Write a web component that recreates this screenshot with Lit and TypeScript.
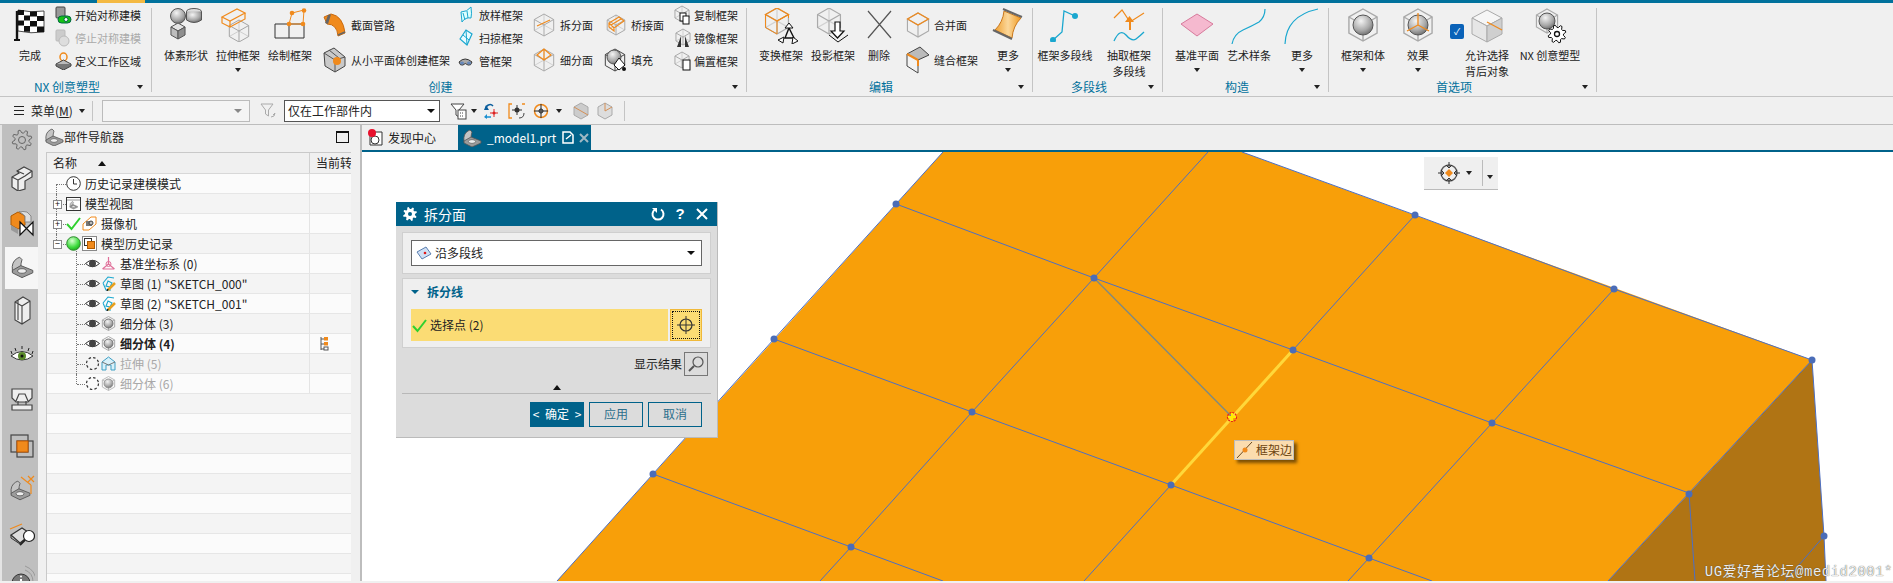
import { LitElement, html, css, svg, TemplateResult } from "lit";
import { customElement } from "lit/decorators.js";

const GR = "#9a9a9a";
const OR = "#f08a1c";
const CY = "#1aa7cf";

const ic = (w: number, h: number, body: unknown) =>
  html`<svg class="ic" width=${w} height=${h} viewBox="0 0 ${w} ${h}">${body}</svg>`;

// wire cube, centre cx,cy radius r
function wire(cx: number, cy: number, r: number, col = GR, sw = 1, back = true) {
  const dx = r * 0.88, dy = r * 0.5;
  return svg`<g fill="none" stroke=${col} stroke-width=${sw}>
    <path d="M${cx} ${cy - r}L${cx + dx} ${cy - dy}V${cy + dy}L${cx} ${cy + r}L${cx - dx} ${cy + dy}V${cy - dy}Z"/>
    <path d="M${cx - dx} ${cy - dy}L${cx} ${cy}L${cx + dx} ${cy - dy}M${cx} ${cy}V${cy + r}"/>
    ${back ? svg`<path opacity=".45" d="M${cx - dx} ${cy + dy}L${cx} ${cy}L${cx + dx} ${cy + dy}M${cx} ${cy}V${cy - r}"/>` : null}
  </g>`;
}
const solidCube = (cx: number, cy: number, r: number) => {
  const dx = r * 0.88, dy = r * 0.5;
  return svg`<path fill="#e4e4e4" stroke="#555" d="M${cx} ${cy - r}L${cx + dx} ${cy - dy}L${cx} ${cy}L${cx - dx} ${cy - dy}Z"/>
  <path fill="#bdbdbd" stroke="#555" d="M${cx - dx} ${cy - dy}L${cx} ${cy}V${cy + r}L${cx - dx} ${cy + dy}Z"/>
  <path fill="#8f8f8f" stroke="#555" d="M${cx + dx} ${cy - dy}L${cx} ${cy}V${cy + r}L${cx + dx} ${cy + dy}Z"/>`;
};
const ball = (cx: number, cy: number, r: number, stroke = "#555") =>
  svg`<circle cx=${cx} cy=${cy} r=${r} fill="url(#sph)" stroke=${stroke}/>`;

function gear(cx: number, cy: number, r1: number, r2: number, n: number) {
  let d = "";
  for (let i = 0; i < n * 4; i++) {
    const a = (i * Math.PI * 2) / (n * 4) - Math.PI / 8;
    const r = i % 4 < 2 ? r2 : r1;
    d += `${i ? "L" : "M"}${(cx + r * Math.cos(a)).toFixed(1)} ${(cy + r * Math.sin(a)).toFixed(1)}`;
  }
  return d + "Z";
}
// the L bracket with a hole, used for part navigator and tabs
const part = () => svg`
  <path d="M2 12Q1 5 6 2L8 1L10 3Q9 6 9 9L2 13Z" fill="#c4c4c4" stroke="#555" stroke-width=".8"/>
  <path d="M2 12L9 8L19 12V14L10 18L2 14Z" fill="#9c9c9c" stroke="#555" stroke-width=".8"/>
  <ellipse cx="10" cy="12.500" rx="3.600" ry="1.900" fill="#eee" stroke="#555" stroke-width=".7"/>`;
const hexBall = (extra: unknown = null) => svg`${wire(18, 17, 16, "#a9a9a9", 1.4, false)}${ball(18, 17, 10)}${extra}`;

const I: Record<string, () => TemplateResult> = {
  flag: () => ic(34, 34, svg`<path d="M4 3V32" stroke="#111" stroke-width="2.4"/><rect x="1" y="31" width="6" height="2" fill="#111"/>
    <path d="M5 2 Q18 5 31 3 V24 Q18 26 5 23Z" fill="#fff" stroke="#222" stroke-width=".8"/>
    <path fill="#111" d="M5 2h6v5H5zM17 3.500h7v5h-7zM11 7.500h6v5h-6zM24 8h7v5h-7zM5 12.500h6v5H5zM17 13h7v5.500h-7zM11 18h6v5.800h-6zM24 18.500h7v5.500h-7z"/>`),
  symOn: () => ic(17, 18, svg`<rect x="1" y="1" width="9" height="11" rx="1" fill="#999" stroke="#444"/><rect x="3" y="10" width="13" height="7" rx="3.500" fill="#16c316" stroke="#064"/><circle cx="11" cy="13.500" r="2" fill="#fff" stroke="#064"/>`),
  symOff: () => ic(17, 18, svg`<rect x="1" y="1" width="9" height="11" rx="1" fill="#ccc" stroke="#bbb"/><circle cx="9" cy="12" r="5" fill="#ddd" stroke="#bbb"/>`),
  region: () => ic(17, 18, svg`<ellipse cx="8.500" cy="5" rx="3.500" ry="4" fill="none" stroke=${OR} stroke-width="1.500"/><path d="M1 12L8.500 8L16 12L8.500 16Z" fill="#bbb" stroke="#444"/><path d="M1 12V14L8.500 18L16 14V12" fill="#777" stroke="#444"/>`),
  solid: () => ic(36, 34, svg`${ball(10, 8, 7.500)}<ellipse cx="26" cy="3.500" rx="7.500" ry="3" fill="#ddd" stroke="#555"/><path d="M18.500 3.500V12Q26 17 33.500 12V3.500" fill="url(#sph)" stroke="#555"/>${solidCube(10, 23, 8)}`),
  extrude: () => ic(36, 34, svg`${wire(19, 23, 11, "#a5a5a5")}<g fill="none" stroke=${OR} stroke-width="1.200"><path d="M2 9L17 1L25 5L10 13Z"/><path d="M2 9V15L10 19V13M25 5V11L10 19"/></g>`),
  sketch: () => ic(36, 34, svg`<path d="M3 16H32V30H3ZM17 16V30" fill="none" stroke="#333"/><path d="M17 16L20 5L32 2L31 16Z" fill="none" stroke=${OR}/><g fill=${OR}><circle cx="17" cy="16" r="2.300"/><circle cx="20" cy="5" r="2.300"/><circle cx="32" cy="2.500" r="2.300"/><circle cx="31" cy="16" r="2.300"/></g>`),
  pipe: () => ic(23, 24, svg`<path d="M1 4 L8 1 Q20 3 22 20 L15 23 Q14 11 4 11Z" fill=${OR} stroke="#c96b10"/><path d="M2 10L5 2L8 1.500L5 11Z" fill="#666"/><path d="M15 22L22 19" stroke="#666" stroke-width="1.500"/>`),
  facet: () => ic(23, 26, svg`<path d="M1 6L11 1L22 10V19L12 25L2 19Z" fill="#c9c9c9" stroke="#444"/><path d="M1 6L12 13V25M12 13L22 10M6 3L16 11" fill="none" stroke="#555"/><circle cx="14" cy="14" r="4" fill=${OR}/>`),
  loft: () => ic(14, 17, svg`<path d="M2 6Q8 6 12 1Q13 8 12 12Q6 11 3 16Z" fill="#dff" stroke=${CY}/><path d="M4 7L6 14M8 5L9 12" stroke=${CY}/>`),
  sweep: () => ic(14, 17, svg`<path d="M1 10L7 1L13 5L8 16Z" fill="#e8fbff" stroke=${CY} stroke-width="1.200"/><path d="M4 6L10 11M7 1L8 16" stroke=${CY}/>`),
  tube: () => ic(15, 12, svg`<path d="M1 7Q7 1 14 7Q13 11 10 10Q7 7 5 10Q2 11 1 7Z" fill="#aaa" stroke="#333"/><ellipse cx="4" cy="8" rx="2" ry="1.500" fill="#68b"/><ellipse cx="11" cy="8" rx="2" ry="1.500" fill="#68b"/>`),
  split: () => ic(24, 24, svg`${wire(12, 12, 11, "#aaa")}<path d="M5 13L18 7" stroke=${OR} stroke-width="1.200"/>`),
  subdiv: () => ic(24, 24, svg`${wire(12, 12, 11, "#aaa")}<path d="M12 1L5 7L12 12L19 7ZM12 1V12" fill="none" stroke=${OR} stroke-width="1.200"/>`),
  bridge: () => ic(20, 22, svg`${wire(10, 11, 10, "#aaa")}<path d="M3 9L13 3L18 7L8 14ZM3 9V13L8 17V14M5 11L15 5" fill="none" stroke=${OR} stroke-width="1.200"/>`),
  fill: () => ic(23, 24, svg`${wire(11, 12, 11, "#444", 1, false)}${ball(10, 9, 7)}<path d="M15 10L21 17L15 22L10 17Z" fill="#fff" stroke="#111"/><circle cx="20" cy="21" r="2" fill="#111"/>`),
  copy: () => ic(18, 20, svg`${wire(8, 9, 8, "#aaa")}<rect x="6" y="8" width="6" height="8" fill="#fff" stroke="#111"/><rect x="9" y="11" width="6" height="8" fill="#fff" stroke="#111"/>`),
  mirror: () => ic(18, 20, svg`${wire(9, 9, 8, "#aaa")}<path d="M3 19L7 8V19ZM15 19L11 8V19Z" fill="#333"/>`),
  offset: () => ic(18, 20, svg`${wire(8, 9, 8, "#aaa")}<rect x="9" y="9" width="7" height="10" fill="#fff" stroke="#111"/>`),
  transform: () => ic(36, 36, svg`${wire(14, 13, 13, "#aaa", 1.200)}<path d="M2.500 6.500L14 0L25.500 6.500L14 13Z" fill="none" stroke=${OR} stroke-width="1.300"/><path d="M2.500 6.500V19.500L14 26V13M14 13L25.500 6.500V10" fill="none" stroke=${OR} stroke-width="1"/><path d="M22 30L26 20L31 30Z" fill="none" stroke="#111" stroke-width="1.400"/><path d="M26 15L30 20H22ZM15 32L21 29L20 35ZM35 33L29 36L30 29Z" fill="#fff" stroke="#111"/>`),
  project: () => ic(36, 36, svg`${wire(14, 13, 13, "#aaa", 1.200)}<path d="M20 14H25V23H29L22.500 30L16 23H20Z" fill="#fff" stroke="#111" stroke-width="1.200"/><path d="M14 27L23 34L33 27" fill="none" stroke="#111"/>`),
  del: () => ic(26, 32, svg`<path d="M2 3L25 30M25 3L2 30" stroke="#555" stroke-width="1.200"/>`),
  merge: () => ic(24, 26, svg`${wire(12, 13, 12, "#aaa", 1.100, false)}<path d="M1.500 7L12 13L22.500 7L12 1Z" fill="none" stroke=${OR} stroke-width="1.200"/>`),
  sew: () => ic(24, 28, svg`<path d="M1 8L12 14V27L1 20Z" fill="#f3f3f3" stroke="#444"/><path d="M1 8L14 1L23 9L12 14Z" fill="#bbb" stroke="#444"/><path d="M1 8L12 14" stroke=${OR} stroke-width="2"/><path d="M12 14V20" stroke=${OR} stroke-width="2"/>`),
  banner: () => ic(34, 34, svg`<path d="M13 3L30 10Q22 18 21 30L4 22Q12 14 13 3Z" fill="url(#ban)" stroke="#c8771c"/><path d="M12 1L31 9M2 22L21 31" stroke="#666" stroke-width="2"/>`),
  poly: () => ic(34, 34, svg`<path d="M5 32L14 24L16 3L27 8" fill="none" stroke=${CY} stroke-width="1.300"/><circle cx="5" cy="32" r="3" fill=${CY}/><circle cx="27" cy="8" r="3" fill=${CY}/>`),
  extract: () => ic(34, 36, svg`<path d="M2 10L10 2L18 14L32 5" fill="none" stroke=${OR} stroke-width="1.200"/><path d="M17 22V14H13L17.500 8L22 14H19V22Z" fill=${OR}/><path d="M2 33Q8 20 14 27T24 31T32 24" fill="none" stroke=${CY} stroke-width="1.300"/>`),
  plane: () => ic(34, 34, svg`<path d="M1 16L17 6L33 16L17 28Z" fill="#f5b9cf" stroke="#d77a9c"/>`),
  spline: () => ic(36, 36, svg`<path d="M1 36Q3 26 12 22T28 14Q34 9 34 1" fill="none" stroke=${CY} stroke-width="1.200"/>`),
  arc: () => ic(36, 36, svg`<path d="M1 36Q2 8 34 1" fill="none" stroke=${CY} stroke-width="1.200"/>`),
  hexb: () => ic(36, 34, hexBall()),
  hexe: () => ic(36, 34, hexBall(svg`<path d="M18 17V5M18 17L7 23M18 17L29 23" stroke=${OR} stroke-width="1.300"/>`)),
  back: () => ic(36, 36, svg`<path d="M18 2L33 10L18 18L3 10Z" fill="#f6f6f6" stroke="#aaa"/><path d="M3 10L18 18V34L3 26Z" fill="#e6e6e6" stroke="#aaa"/><path d="M33 10L18 18V34L33 26Z" fill="#cfcfcf" stroke="#aaa"/><path d="M18 14L33 22" stroke=${OR} stroke-width="1.200"/>`),
  nxg: () => ic(36, 36, svg`${wire(15, 13, 12, "#aaa", 1.200, false)}${ball(15, 13, 8)}<path d=${gear(25, 26, 6.500, 9, 8)} fill="#fff" stroke="#111"/><circle cx="25" cy="26" r="2.500" fill="#fff" stroke="#111" stroke-width="1.300"/>`),
  // toolbar
  funnelOff: () => ic(18, 18, svg`<path d="M1 2H13L8.500 8V14L5.500 12V8Z" fill="none" stroke="#aaa"/><path d="M11 15Q15 15 15 11M15 11L13 13" fill="none" stroke="#aaa"/>`),
  funnelTab: () => ic(17, 18, svg`<path d="M1 2H14L9 8V15L6 13V8Z" fill="#fff" stroke="#444"/><rect x="8" y="8" width="8" height="9" fill="#fff" stroke="#444"/><path d="M10 11h4M10 14h4" stroke="#444" stroke-dasharray="1 1"/>`),
  swap: () => ic(15, 18, svg`<path d="M3 7A4 4 0 0 1 10 4" fill="none" stroke="#0a5d9c" stroke-width="1.500"/><path d="M1 8L6 8L3 3Z" fill="#0a5d9c"/><path d="M8 15H2" stroke="#1a8fd0" stroke-width="1.500"/><path d="M1 15L4 12V17Z" fill="#1a8fd0"/><path d="M11 7V15M7 11H15" stroke="#d22" stroke-width="1"/><circle cx="11" cy="11" r="1.500" fill="#d22"/>`),
  bracket: () => ic(18, 18, svg`<path d="M4 2H1V16H4M14 2H17" fill="none" stroke=${OR} stroke-width="1.300"/><path d="M9 3V13M4 8H14" stroke="#333"/><circle cx="9" cy="8" r="2.500" fill="#333"/><path d="M11 16Q16 16 16 11" fill="none" stroke="#444"/>`),
  target: () => ic(17, 18, svg`<circle cx="8" cy="9" r="6.500" fill="none" stroke=${OR} stroke-width="1.500"/><path d="M8 2V16M1 9H15" stroke="#222"/><circle cx="8" cy="9" r="2" fill="none" stroke="#222"/>`),
  cubeA: () => ic(16, 18, svg`<path d="M8 1L15 5V13L8 17L1 13V5Z" fill="#ccc" stroke="#aaa"/><path d="M1 5L15 13" stroke="#d59056"/>`),
  cubeB: () => ic(16, 18, svg`<path d="M8 1L15 5V13L8 17L1 13V5Z" fill="#ddd" stroke="#aaa"/><path d="M8 1V9L15 5" fill="none" stroke="#d59056"/>`),
  // tree
  clock: () => ic(15, 15, svg`<circle cx="7.500" cy="7.500" r="6.800" fill="#fff" stroke="#333"/><path d="M7.500 3V8H11" fill="none" stroke="#333"/>`),
  view: () => ic(15, 15, svg`<rect x=".5" y="1.500" width="14" height="13" fill="#fff" stroke="#333"/><path d="M.5 4H14.500" stroke="#333" stroke-dasharray="1 1"/><g transform="translate(3 5) scale(.45)">${part()}</g>`),
  check: () => ic(15, 15, svg`<path d="M1 8L5.500 13L14 2" fill="none" stroke="#2fd02f" stroke-width="2"/>`),
  cam: () => ic(15, 15, svg`<path d="M1 8L9 1H14V8L7 14H1Z" fill="#fff" stroke=${OR}/><rect x="4" y="5" width="6" height="5" fill="#777"/><circle cx="9" cy="7" r="2" fill="#bbb" stroke="#444"/>`),
  green: () => ic(15, 15, svg`<circle cx="7.500" cy="7.500" r="6.800" fill="url(#grn)" stroke="#2d8a2d"/>`),
  hist: () => ic(15, 15, svg`<rect x=".5" y=".5" width="14" height="14" fill="#fff" stroke="#888"/><rect x="2.500" y="2.500" width="7" height="7" fill="#fff" stroke="#333"/><rect x="5.500" y="5.500" width="7" height="7" fill=${OR} stroke="#b05a00"/>`),
  eye: () => ic(15, 15, svg`<path d="M.5 7.500Q7.500 1 14.500 7.500Q7.500 14 .5 7.500Z" fill="#fff" stroke="#333"/><circle cx="7.500" cy="7.500" r="3.500" fill="#444"/>`),
  dash: () => ic(15, 15, svg`<circle cx="7.500" cy="7.500" r="6" fill="none" stroke="#333" stroke-width="1.200" stroke-dasharray="2.500 2.200"/>`),
  csys: () => ic(15, 15, svg`<path d="M7.500 1V8L1.500 13M7.500 8L13.500 13M2 13H13" fill="none" stroke="#e0709a" stroke-width="1.200"/><circle cx="7.500" cy="8" r="2.500" fill="none" stroke="#e0709a"/>`),
  sk: () => ic(15, 15, svg`<path d="M2 7L7 1L13 2M2 7L5 14H10M7 5L11 7L9 11L5 10Z" fill="none" stroke=${CY} stroke-width="1.100"/><path d="M7 14L14 7" stroke="#e8a020" stroke-width="2.500"/><path d="M6 15L7 13" stroke="#222" stroke-width="1.500"/>`),
  hex: () => ic(15, 15, svg`${wire(7.500, 7.500, 7, "#aaa", 1, false)}${ball(7.500, 7.500, 4.500, "#777")}`),
  hexDim: () => ic(15, 15, svg`${wire(7.500, 7.500, 7, "#bbb", 1, false)}${ball(7.500, 7.500, 4.500, "#999")}`),
  ext: () => ic(15, 15, svg`<path d="M1 6L7.500 1L14 6V14H10V9H5V14H1Z" fill="#d8f1fa" stroke="#3f9fc4"/><path d="M1 6L7.500 9L14 6" fill="none" stroke="#777"/>`),
  cur: () => ic(9, 15, svg`<path d="M1 1V14M1 3H4M1 8H4M1 13H4" fill="none" stroke="#555"/><rect x="4" y="1" width="4" height="3.500" fill=${OR}/><rect x="4" y="6" width="4" height="3.500" fill=${OR}/><rect x="4" y="11" width="4" height="3" fill="#fff" stroke="#555"/>`),
  // rail
  rGear: () => ic(24, 24, svg`<path d=${gear(12, 12, 7, 10, 8)} fill="none" stroke="#666"/><circle cx="12" cy="12" r="3.500" fill="none" stroke="#666"/>`),
  rAsm: () => ic(24, 26, svg`<path d="M7 6L14 2L22 6L22 12L15 16V24L8 26L2 22V12L9 8Z" fill="#eee" stroke="#444" stroke-width="1.200"/><path d="M2 12L8 15V26M8 15L15 11L22 6M14 9L7 6" fill="none" stroke="#444" stroke-width="1.200"/>`),
  rCon: () => ic(26, 26, svg`<path d="M2 5L9 1L16 5V14L9 18L2 14Z" fill=${OR} stroke="#b05a00"/><path d="M10 0L18 1L22 5V11H16V5Z" fill="#ddd" stroke="#888"/><path d="M2 14L9 18V23L2 19Z" fill="#999"/><path d="M11 11L24 24V11L11 24Z" fill="#fff" stroke="#111" stroke-width="1.200"/>`),
  rPart: () => ic(26, 26, svg`<g transform="translate(1 1) scale(1.200)">${part()}</g>`),
  rBook: () => ic(20, 30, svg`<path d="M3 7L11 2L18 6V24L10 29L3 25ZM10 11L18 6M10 11V29M3 7L10 11M6 5V25" fill="#eee" stroke="#444" stroke-width="1.100"/>`),
  rEye: () => ic(24, 20, svg`<path d="M1 10Q12 1 23 10Q12 18 1 10Z" fill="#fff" stroke="#333"/><circle cx="12" cy="10" r="4" fill="#5a8a2a"/><circle cx="12" cy="10" r="1.500" fill="#111"/><path d="M2 8L1 5M6 5L5 2M12 3V0M18 5L19 2M22 8L23 5" stroke="#222"/>`),
  rRole: () => ic(24, 24, svg`<path d="M2 1H22V10L18 14H6L2 10ZM6 13L9 6H15L18 13M2 17H22V22H2ZM8 17V13M16 17V13" fill="#eee" stroke="#444" stroke-width="1.200"/>`),
  rLayer: () => ic(26, 26, svg`<rect x="2" y="2" width="17" height="17" fill="none" stroke="#444" stroke-width="1.200"/><rect x="8" y="8" width="16" height="16" fill="none" stroke="#444" stroke-width="1.200"/><rect x="8" y="8" width="11" height="11" fill=${OR} stroke="#c65a00"/>`),
  rDim: () => ic(26, 26, svg`<g transform="translate(0 5) scale(1.100)">${part()}</g><path d="M12 2L22 10M19 1L25 7M25 1L19 7M22 10V19" stroke=${OR} stroke-width="1.200" fill="none"/>`),
  rFind: () => ic(26, 26, svg`<path d="M2 15L13 8L22 14L11 23Z" fill="#ddd" stroke="#333" stroke-width="1.200"/><path d="M2 15V18L11 24" fill="none" stroke="#333"/><path d="M1 9L13 4" stroke=${OR} stroke-width="1.300"/><circle cx="20" cy="16" r="5.500" fill="#fff" stroke="#222" stroke-width="1.200"/><path d="M16 20L11 25" stroke="#222" stroke-width="1.800"/>`),
  rInfo: () => ic(26, 26, svg`<circle cx="12" cy="18" r="9" fill="#777" stroke="#333"/><path d="M12 14V23" stroke="#fff" stroke-width="2"/><circle cx="12" cy="11.500" r="1" fill="#fff"/><path d="M16 5Q24 8 24 17M16 1Q27 5 27 17" fill="none" stroke="#999"/>`),
};

type Row = { icon: string; text: string; dim?: boolean };
type Item =
  | { w: number; ml?: number; icon: string; lines: string[]; arrow?: boolean; check?: boolean }
  | { ml: number; iw: number; gap: number; two?: boolean; rows: Row[] };
type Group = { w: number; pl: number; label: string; items: Item[] };

const GROUPS: Group[] = [
  { w: 151, pl: 8, label: "NX 创意塑型", items: [
    { w: 44, icon: "flag", lines: ["完成"] },
    { ml: 3, iw: 17, gap: 3, rows: [{ icon: "symOn", text: "开始对称建模" }, { icon: "symOff", text: "停止对称建模", dim: true }, { icon: "region", text: "定义工作区域" }] },
  ] },
  { w: 594, pl: 8, label: "创建", items: [
    { w: 52, icon: "solid", lines: ["体素形状"] },
    { w: 52, icon: "extrude", lines: ["拉伸框架"], arrow: true },
    { w: 52, icon: "sketch", lines: ["绘制框架"] },
    { ml: 7, iw: 23, gap: 5, two: true, rows: [{ icon: "pipe", text: "截面管路" }, { icon: "facet", text: "从小平面体创建框架" }] },
    { ml: 8, iw: 15, gap: 6, rows: [{ icon: "loft", text: "放样框架" }, { icon: "sweep", text: "扫掠框架" }, { icon: "tube", text: "管框架" }] },
    { ml: 9, iw: 24, gap: 4, two: true, rows: [{ icon: "split", text: "拆分面" }, { icon: "subdiv", text: "细分面" }] },
    { ml: 11, iw: 23, gap: 4, two: true, rows: [{ icon: "bridge", text: "桥接面" }, { icon: "fill", text: "填充" }] },
    { ml: 10, iw: 18, gap: 2, rows: [{ icon: "copy", text: "复制框架" }, { icon: "mirror", text: "镜像框架" }, { icon: "offset", text: "偏置框架" }] },
  ] },
  { w: 285, pl: 8, label: "编辑", items: [
    { w: 52, icon: "transform", lines: ["变换框架"] },
    { w: 52, icon: "project", lines: ["投影框架"] },
    { w: 40, icon: "del", lines: ["删除"] },
    { ml: 7, iw: 24, gap: 4, two: true, rows: [{ icon: "merge", text: "合并面" }, { icon: "sew", text: "缝合框架" }] },
    { w: 44, ml: 8, icon: "banner", lines: ["更多"], arrow: true },
  ] },
  { w: 129, pl: 2, label: "多段线", items: [
    { w: 60, icon: "poly", lines: ["框架多段线"] },
    { w: 64, ml: 2, icon: "extract", lines: ["抽取框架", "多段线"] },
  ] },
  { w: 165, pl: 8, label: "构造", items: [
    { w: 52, icon: "plane", lines: ["基准平面"], arrow: true },
    { w: 52, icon: "spline", lines: ["艺术样条"] },
    { w: 52, ml: 1, icon: "arc", lines: ["更多"], arrow: true },
  ] },
  { w: 267, pl: 8, label: "首选项", items: [
    { w: 52, icon: "hexb", lines: ["框架和体"], arrow: true },
    { w: 52, ml: 3, icon: "hexe", lines: ["效果"], arrow: true },
    { w: 52, ml: 17, icon: "back", lines: ["允许选择", "背后对象"], check: true },
    { w: 70, ml: 2, icon: "nxg", lines: ["NX 创意塑型"] },
  ] },
];

type Node = { lv: 0 | 1; tog?: "+" | "-"; icons: string[]; text: string; dim?: boolean; bold?: boolean; cur?: boolean };
const TREE: Node[] = [
  { lv: 0, icons: ["clock"], text: "历史记录建模模式" },
  { lv: 0, tog: "+", icons: ["view"], text: "模型视图" },
  { lv: 0, tog: "+", icons: ["check", "cam"], text: "摄像机" },
  { lv: 0, tog: "-", icons: ["green", "hist"], text: "模型历史记录" },
  { lv: 1, icons: ["eye", "csys"], text: "基准坐标系 (0)" },
  { lv: 1, icons: ["eye", "sk"], text: '草图 (1) "SKETCH_000"' },
  { lv: 1, icons: ["eye", "sk"], text: '草图 (2) "SKETCH_001"' },
  { lv: 1, icons: ["eye", "hex"], text: "细分体 (3)" },
  { lv: 1, icons: ["eye", "hex"], text: "细分体 (4)", bold: true, cur: true },
  { lv: 1, icons: ["dash", "ext"], text: "拉伸 (5)", dim: true },
  { lv: 1, icons: ["dash", "hexDim"], text: "细分体 (6)", dim: true },
];

const RAIL: [string, number][] = [["rGear", 30], ["rAsm", 46], ["rCon", 46], ["rPart", 42], ["rBook", 42], ["rEye", 50], ["rRole", 38], ["rLayer", 54], ["rDim", 30], ["rFind", 60], ["rInfo", 30]];

const MESH: number[][][] = [
  [[896, 204], [1094, 278], [1293, 350], [1492, 423], [1689, 493]],
  [[774, 339], [972, 412], [1171, 485], [1369, 558], [1432, 581]],
  [[653, 474], [851, 547], [943, 581]],
  [[1208, 152], [1094, 278], [972, 412], [851, 547], [820, 581]],
  [[1415, 215], [1293, 350], [1171, 485], [1084, 581]],
  [[1614, 289], [1492, 423], [1369, 558], [1348, 581]],
  [[943, 152], [896, 204], [774, 339], [653, 474], [557, 581]],
  [[1242, 152], [1415, 215], [1614, 289], [1812, 360], [1689, 493], [1608, 581]],
  [[1812, 360], [1824, 536], [1826, 581]],
  [[1689, 493], [1695, 581]],
  [[1824, 536], [1785, 581]],
];
const NODES = [[896, 204], [1415, 215], [1614, 289], [1812, 360], [1094, 278], [1293, 350], [1492, 423], [1689, 494], [774, 339], [972, 412], [1171, 485], [1369, 558], [653, 474], [851, 547], [1824, 536]];
const pts = (p: number[][]) => p.map((q) => q.join(",")).join(" ");

@customElement("app-root")
export class AppRoot extends LitElement {
  static styles = css`
    :host { display: flex; flex-direction: column; width: 100%; height: 583px; overflow: hidden; background: #f0f0f0; color: #222;
      font-family: "Noto Sans CJK SC", "Noto Sans", sans-serif; font-size: 12px; line-height: 16px; }
    .ic { display: block; flex: none; }
    .defs { width: 0; height: 0; position: absolute; }
    .top { height: 3px; background: #00719c; flex: none; display: flex; }
    .top i { width: 48px; margin-left: 97px; background: #f4b942; }
    .ribbon { display: flex; height: 93px; flex: none; font-size: 11px; border-bottom: 1px solid #c4c4c4; }
    .group { display: flex; flex-direction: column; flex: none; }
    .gbody { height: 76px; display: flex; }
    .gfoot { height: 16px; display: flex; align-items: center; padding-right: 8px; }
    .gfoot span { flex: 1; text-align: center; color: #00719c; font-size: 12px; }
    .down { width: 0; height: 0; border: 3.500px solid transparent; border-top: 4px solid #222; border-bottom: 0; flex: none; }
    .gfoot .down { margin-left: 3px; }
    .sep { width: 1px; background: #c4c4c4; margin: 5px 0 4px; flex: none; }
    .big { flex: none; display: flex; flex-direction: column; align-items: center; padding-top: 5px; position: relative; white-space: nowrap; }
    .big .pic { height: 36px; margin-bottom: 3px; display: flex; align-items: flex-start; justify-content: center; }
    .big .down { margin-top: 5px; }
    .tick { position: absolute; left: -11px; top: 21px; width: 14px; height: 15px; border-radius: 2px; background: #0a62b8; color: #fff; font-size: 9px; line-height: 15px; text-align: center; }
    .col { flex: none; }
    .col.two { padding-top: 4px; }
    .srow { height: 23px; display: flex; align-items: center; white-space: nowrap; }
    .col.two .srow { height: 35px; }
    .srow .pic { display: flex; justify-content: center; flex: none; }
    .srow.dim { color: #aaa; }
    .toolbar { height: 27px; flex: none; display: flex; align-items: center; border-bottom: 1px solid #bdbdbd; }
    .burger { width: 10px; height: 9px; margin-left: 14px; border-top: 1px solid #222; border-bottom: 1px solid #222; box-sizing: border-box; background: linear-gradient(#222,#222) 0 3px/100% 1px no-repeat; }
    .menu { margin-left: 7px; width: 48px; }
    .tsep { width: 1px; height: 20px; background: #c4c4c4; flex: none; }
    .combo { height: 22px; box-sizing: border-box; border: 1px solid #bbb; background: #f4f4f4; display: flex; align-items: center; justify-content: flex-end; padding: 0 7px; flex: none; }
    .combo.on { background: #fff; border-color: #555; justify-content: space-between; padding: 0 4px 0 3px; }
    .down.g { border-top-color: #888; border-width: 4px 4px 0; }
    .down.k { border-top-color: #111; border-width: 4px 4px 0; }
    .main { flex: 1; display: flex; min-height: 0; margin-bottom: 2px; }
    .rail { width: 38px; flex: none; background: #bfbfbf; border-left: 2px solid #e4e4e4; box-sizing: border-box; overflow: hidden; }
    .rt { display: flex; align-items: center; justify-content: center; margin-left: 3px; }
    .rt.on { background: #f6f6f6; }
    .nav { flex: none; box-sizing: border-box; padding: 0 9px 0 8px; display: flex; flex-direction: column; border-right: 2px solid #bdbdbd; width: 324px; }
    .navh { height: 27px; display: flex; align-items: center; flex: none; box-sizing: border-box; padding-bottom: 3px; margin-left: -2px; }
    .navh b { font-weight: 400; flex: 1; }
    .maxi { width: 11px; height: 9px; border: 1px solid #111; border-top-width: 2px; margin-right: 2px; }
    .table { flex: 1; border: solid #c9c9c9; border-width: 1px 0 0 1px; overflow: hidden; min-height: 0; }
    .thead { height: 20px; display: flex; background: #f0f0f0; border-bottom: 1px solid #d8d8d8; white-space: nowrap; overflow: hidden; }
    .thead div:first-child { width: 263px; box-sizing: border-box; padding-left: 6px; display: flex; align-items: center; border-right: 1px solid #d0d0d0; flex: none; }
    .thead div:last-child { padding-left: 6px; line-height: 20px; }
    .up { width: 0; height: 0; border: 4.500px solid transparent; border-bottom: 5px solid #111; border-top: 0; margin-left: 21px; }
    .row { height: 20px; box-sizing: border-box; display: flex; border-bottom: 1px solid #e6e6e6; background: #fbfbfb; }
    .row:nth-child(even) { background: #f4f4f4; }
    .tcell { width: 263px; flex: none; box-sizing: border-box; border-right: 1px solid #e4e4e4; display: flex; align-items: center; gap: 1px; position: relative; white-space: nowrap; padding-left: 19px; }
    .tcell.l1 { padding-left: 38px; }
    .tcell span { margin-left: 3px; }
    .row.dim span { color: #a8a8a8; }
    .row.bold span { font-weight: 700; }
    .ccell { padding: 2px 0 0 10px; }
    .v { position: absolute; border-left: 1px dotted #777; }
    .h { position: absolute; border-top: 1px dotted #777; top: 10px; }
    .tog { position: absolute; left: 6px; top: 6px; width: 7px; height: 7px; border: 1px solid #888; background: #fff; font-size: 9px; line-height: 6px; text-align: center; color: #111; }
    .view { flex: 1; min-width: 0; display: flex; flex-direction: column; }
    .tabs { height: 25px; flex: none; display: flex; border-bottom: 2px solid #00628a; background: #efefef; padding-left: 5px; }
    .tab { display: flex; align-items: center; gap: 4px; }
    .tab.a { width: 90px; }
    .tab.b { width: 133px; margin-left: 1px; background: #00628a; color: #fff; box-sizing: border-box; padding-left: 4px; font-size: 12px; }
    .tab.b span { margin-left: 1px; margin-right: 2px; }
    .canvas { flex: 1; position: relative; background: #fff; overflow: hidden; min-height: 0; }
    .canvas > svg { display: block; width: 100%; height: 100%; }
    .snap { position: absolute; left: 1062px; top: 5px; width: 74px; height: 33px; background: #efefef; border-bottom: 1px solid #bbb; display: flex; align-items: center; padding-left: 14px; box-sizing: border-box; }
    .snap .down { margin-left: 6px; }
    .snap i { width: 1px; height: 26px; background: #bbb; margin-left: 10px; }
    .snap .down.low { margin-top: 7px; margin-left: 4px; }
    .tip { position: absolute; left: 872px; top: 288px; height: 20px; width: 60px; box-sizing: border-box; background: #fbdcae; border: 1px solid #bdbdbd; box-shadow: 3px 3px 3px rgba(0,0,0,.5); display: flex; align-items: center; gap: 3px; padding-left: 1px; color: #6b4410; }
    .mark { position: absolute; right: 0; bottom: 1px; font-family: "Liberation Mono", "Noto Sans CJK SC", monospace; font-size: 14px; letter-spacing: .5px; color: #eee; text-shadow: 0 0 1px #333; white-space: nowrap; }
    .dlg { position: absolute; left: 34px; top: 50px; width: 322px; height: 236px; background: #dcdcdc; border: solid #bbb; border-width: 0 1px 1px 0; box-sizing: border-box; }
    .dh { height: 24px; background: #00628a; color: #fff; display: flex; align-items: center; padding-left: 7px; font-size: 14px; gap: 7px; }
    .dh b { font-weight: 400; flex: 1; }
    .dh .q { font-weight: 700; font-size: 15px; font-family: "Liberation Sans", sans-serif; width: 16px; text-align: center; }
    .sec { margin: 0 6px 4px; background: #efefef; border: 1px solid #cfcfcf; box-sizing: border-box; padding: 7px 8px; }
    .sec.s1 { margin-top: 6px; height: 42px; }
    .sec.s2 { height: 70px; padding-top: 0; }
    .sel { height: 26px; background: #fff; border: 1px solid #666; box-sizing: border-box; display: flex; align-items: center; padding: 0 6px 0 4px; gap: 3px; }
    .sel span { flex: 1; }
    .st { height: 24px; display: flex; align-items: center; color: #00628a; font-weight: 700; gap: 8px; margin-top: 1px; margin-bottom: 5px; }
    .down.t { border-top-color: #00628a; border-width: 4px 4px 0; }
    .pick { display: flex; gap: 2px; height: 32px; }
    .py { flex: 1; background: #fbdc74; display: flex; align-items: center; gap: 3px; padding-left: 1px; }
    .pb { width: 32px; box-sizing: border-box; background: #fbdc74; border: 1px solid #f0b93a; display: flex; align-items: center; justify-content: center; }
    .pb div { width: 26px; height: 26px; border: 1px dotted #111; display: flex; align-items: center; justify-content: center; }
    .res { display: flex; justify-content: flex-end; align-items: center; gap: 2px; padding-right: 9px; height: 24px; }
    .res div { width: 24px; height: 24px; box-sizing: border-box; border: 1px solid #777; display: flex; align-items: center; justify-content: center; }
    .more { display: flex; justify-content: center; padding-top: 9px; height: 8px; }
    .up.s { margin: 0; }
    .line { height: 1px; background: #b8b8b8; margin: 0 6px; }
    .btns { display: flex; justify-content: flex-end; gap: 5px; padding: 8px 15px 0 0; }
    .btns div { width: 54px; height: 25px; box-sizing: border-box; border: 1px solid #00628a; color: #2c6f8c; text-align: center; line-height: 22px; font-size: 12px; }
    .btns .ok { background: #00628a; color: #fff; word-spacing: 3px; }
  `;

  big(it: Extract<Item, { w: number }>) {
    return html`<div class="big" style="width:${it.w}px;margin-left:${it.ml ?? 0}px">
      ${it.check ? html`<div class="tick">✓</div>` : null}
      <div class="pic">${I[it.icon]()}</div>
      ${it.lines.map((l) => html`<div>${l}</div>`)}
      ${it.arrow ? html`<div class="down"></div>` : null}
    </div>`;
  }

  col(it: Extract<Item, { iw: number }>) {
    return html`<div class="col ${it.two ? "two" : ""}" style="margin-left:${it.ml}px">
      ${it.rows.map((r) => html`<div class="srow ${r.dim ? "dim" : ""}">
        <div class="pic" style="width:${it.iw}px;margin-right:${it.gap}px">${I[r.icon]()}</div>${r.text}
      </div>`)}
    </div>`;
  }

  ribbon() {
    return html`<div class="ribbon">
      ${GROUPS.map((g) => html`<div class="group" style="width:${g.w}px">
          <div class="gbody" style="padding-left:${g.pl}px">
            ${g.items.map((it) => ("iw" in it ? this.col(it) : this.big(it)))}
          </div>
          <div class="gfoot"><span>${g.label}</span><div class="down"></div></div>
        </div><div class="sep"></div>`)}
    </div>`;
  }

  toolbar() {
    const gap = (n: number) => html`<div style="width:${n}px;flex:none"></div>`;
    return html`<div class="toolbar">
      <div class="burger"></div><div class="menu">菜单(<u>M</u>)</div><div class="down"></div>
      ${gap(7)}<div class="tsep"></div>${gap(9)}
      <div class="combo" style="width:148px"><div class="down g"></div></div>
      ${gap(10)}${I.funnelOff()}${gap(6)}
      <div class="combo on" style="width:156px">仅在工作部件内<div class="down k"></div></div>
      ${gap(10)}${I.funnelTab()}${gap(4)}<div class="down"></div>${gap(6)}
      ${I.swap()}${gap(10)}${I.bracket()}${gap(7)}${I.target()}${gap(6)}<div class="down"></div>${gap(11)}
      ${I.cubeA()}${gap(8)}${I.cubeB()}${gap(11)}<div class="tsep"></div>
    </div>`;
  }

  rail() {
    return html`<div class="rail">
      ${RAIL.map(([n, h]) => html`<div class="rt ${n === "rPart" ? "on" : ""}" style="height:${h}px">${I[n]()}</div>`)}
    </div>`;
  }

  tree() {
    const rows = [];
    for (let i = 0; i < 21; i++) {
      const n = TREE[i];
      if (!n) { rows.push(html`<div class="row"></div>`); continue; }
      rows.push(html`<div class="row ${n.dim ? "dim" : ""} ${n.bold ? "bold" : ""}">
        <div class="tcell ${n.lv ? "l1" : ""}">
          ${n.lv
            ? html`<div class="v" style="left:29px;top:0;height:${i === 10 ? 10 : 20}px"></div><div class="h" style="left:30px;width:8px"></div>`
            : html`<div class="v" style="left:9px;top:${i === 0 ? 10 : 0}px;height:${i === 3 ? 6 : i === 0 ? 10 : 20}px"></div><div class="h" style="left:10px;width:9px"></div>`}
          ${n.tog ? html`<div class="tog">${n.tog === "+" ? "+" : "−"}</div>` : null}
          ${n.tog === "-" ? html`<div class="v" style="left:29px;top:17px;height:3px"></div>` : null}
          ${n.icons.map((k) => I[k]())}
          <span>${n.text}</span>
        </div>
        <div class="ccell">${n.cur ? I.cur() : null}</div>
      </div>`);
    }
    return html`<div class="nav">
      <div class="navh">${ic(20, 18, part())}<b>部件导航器</b><div class="maxi"></div></div>
      <div class="table">
        <div class="thead"><div>名称<i class="up"></i></div><div>当前转</div></div>
        <div>${rows}</div>
      </div>
    </div>`;
  }

  dialog() {
    return html`<div class="dlg">
      <div class="dh">
        ${ic(14, 14, svg`<path d=${gear(7, 7, 5, 7, 8)} fill="#fff"/><circle cx="7" cy="7" r="2" fill="#00628a"/>`)}
        <b>拆分面</b>
        ${ic(14, 14, svg`<path d="M4 2.500A5.500 5.500 0 1 0 10 2.500" fill="none" stroke="#fff" stroke-width="2"/><path d="M1 1H6V6Z" fill="#fff"/>`)}
        <div class="q">?</div>
        ${ic(14, 14, svg`<path d="M2 2L12 12M12 2L2 12" stroke="#fff" stroke-width="2"/>`)}
        <div style="width:1px"></div>
      </div>
      <div class="sec s1"><div class="sel">
        ${ic(16, 14, svg`<path d="M1 6L10 1L15 8L6 13Z" fill="#cfe0f5" stroke="#5b7fb0"/><circle cx="9" cy="7" r="1.300" fill="#e01b1b"/>`)}
        <span>沿多段线</span><div class="down k"></div>
      </div></div>
      <div class="sec s2">
        <div class="st"><div class="down t"></div>拆分线</div>
        <div class="pick">
          <div class="py">${ic(15, 15, svg`<path d="M1 8L5.500 13L14 2" fill="none" stroke="#2fd02f" stroke-width="2"/>`)}选择点 (2)</div>
          <div class="pb"><div>${ic(20, 20, svg`<circle cx="10" cy="10" r="6" fill="none" stroke="#333" stroke-width="1.200"/><path d="M10 1V19M1 10H19" stroke="#333"/>`)}</div></div>
        </div>
      </div>
      <div class="res">显示结果<div>${ic(18, 18, svg`<circle cx="11" cy="7" r="5" fill="none" stroke="#555" stroke-width="1.200"/><path d="M7 11L2 16" stroke="#555" stroke-width="2"/>`)}</div></div>
      <div class="more"><i class="up s"></i></div>
      <div class="line"></div>
      <div class="btns"><div class="ok">&lt;&nbsp;确定&nbsp;&gt;</div><div>应用</div><div>取消</div></div>
    </div>`;
  }

  render() {
    return html`
      <svg class="defs"><defs>
        <radialGradient id="sph" cx=".4" cy=".3" r=".8"><stop offset="0" stop-color="#f4f4f4"/><stop offset=".6" stop-color="#a8a8a8"/><stop offset="1" stop-color="#5e5e5e"/></radialGradient>
        <radialGradient id="grn" cx=".4" cy=".3" r=".8"><stop offset="0" stop-color="#d8ffd0"/><stop offset=".6" stop-color="#3fdc3f"/><stop offset="1" stop-color="#159a15"/></radialGradient>
        <linearGradient id="ban"><stop offset="0" stop-color="#f0a030"/><stop offset=".5" stop-color="#fbd79a"/><stop offset="1" stop-color="#f09a20"/></linearGradient>
      </defs></svg>
      <div class="top"><i></i></div>
      ${this.ribbon()}
      ${this.toolbar()}
      <div class="main">
        ${this.rail()}
        ${this.tree()}
        <div class="view">
          <div class="tabs">
            <div class="tab a">${ic(17, 17, svg`<path d="M3 3H15V16H3Z" fill="#fff" stroke="#333"/><circle cx="8" cy="11" r="4" fill="none" stroke="#333"/><circle cx="5" cy="4" r="4" fill="#e8112d"/>`)}发现中心</div>
            <div class="tab b">${ic(20, 18, part())}<span>_model1.prt</span>
              ${ic(12, 13, svg`<path d="M1 1H8L11 4V12H1Z" fill="none" stroke="#fff" stroke-width="1.500"/><path d="M4 8L9 4" stroke="#fff" stroke-width="1.500"/>`)}
              ${ic(12, 12, svg`<path d="M2 2L10 10M10 2L2 10" stroke="#9fb8c4" stroke-width="2"/>`)}</div>
          </div>
          <div class="canvas">
            <svg viewBox="362 152 1531 429" preserveAspectRatio="none">
              <polygon points="943,152 1242,152 1812,360 1608,581 557,581" fill="#f89f09"/>
              <polygon points="1812,360 1824,536 1826,581 1608,581" fill="#b07414"/>
              ${MESH.map((m) => svg`<polyline points=${pts(m)} fill="none" stroke="#4c6fc4" stroke-width="1"/>`)}
              <line x1="1094" y1="278" x2="1231" y2="416" stroke="#7f8a80" stroke-width="1.400"/>
              <line x1="1293" y1="350" x2="1171" y2="485" stroke="#ffd83a" stroke-width="3"/>
              ${NODES.map(([x, y]) => svg`<circle cx=${x} cy=${y} r="3.500" fill="#4b6db8"/>`)}
              <circle cx="1232" cy="417" r="4.500" fill="none" stroke="#e8201a" stroke-width="1.200" stroke-dasharray="2 1"/>
              <path d="M1232 413V421M1228 417H1236" stroke="#ffee00" stroke-width="2"/>
            </svg>
            <div class="snap">
              ${ic(22, 22, svg`<circle cx="11" cy="11" r="8" fill="none" stroke="#555" stroke-width="1.400"/><path d="M11 0V6M11 16V22M0 11H6M16 11H22" stroke="#333"/><path d="M8 3L11 6L14 3M8 19L11 16L14 19M3 8L6 11L3 14M19 8L16 11L19 14" fill="none" stroke="#333"/><path d="M11 7L15 11L11 15L7 11Z" fill=${OR}/>`)}
              <div class="down"></div><i></i><div class="down low"></div>
            </div>
            ${this.dialog()}
            <div class="tip">${ic(17, 18, svg`<path d="M1 17L16 1" stroke="#6b4a20"/><circle cx="9" cy="9" r="2.500" fill=${OR}/>`)}框架边</div>
            <div class="mark">UG爱好者论坛@medid2001*</div>
          </div>
        </div>
      </div>
    `;
  }
}
